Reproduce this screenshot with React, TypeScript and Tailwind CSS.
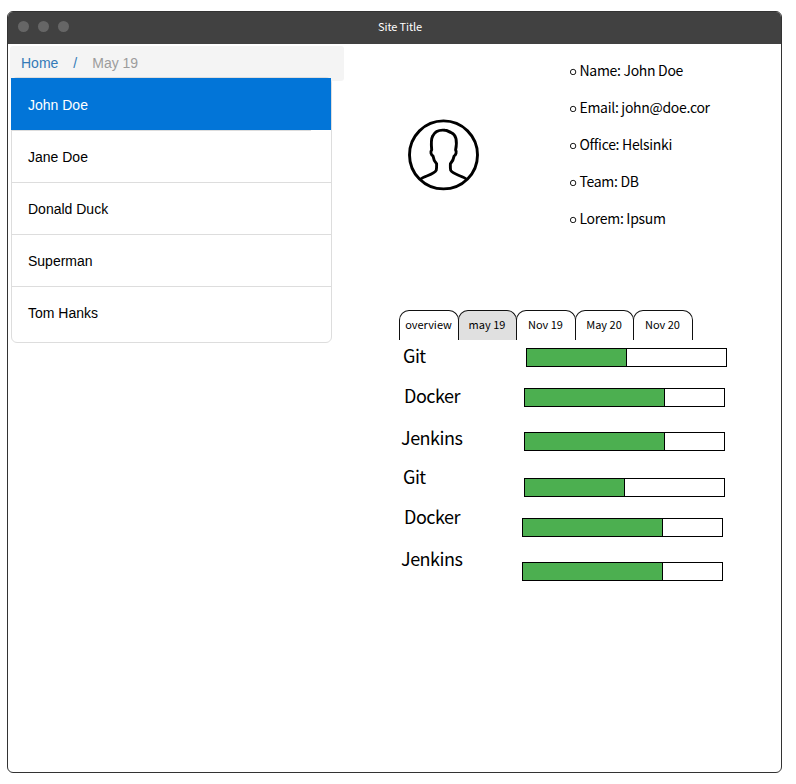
const people = ["Jane Doe", "Donald Duck", "Superman", "Tom Hanks"];

const details = [
  "Name: John Doe",
  "Email: john@doe.cor",
  "Office: Helsinki",
  "Team: DB",
  "Lorem: Ipsum",
];

const tabs = [
  { label: "overview", size: "w-[60px]" },
  { label: "may 19", size: "w-[59px] -ml-px bg-[#e0e0e0]" },
  { label: "Nov 19", size: "w-[60px] -ml-px" },
  { label: "May 20", size: "w-[59px] -ml-px" },
  { label: "Nov 20", size: "w-[60px] -ml-px" },
];

const skills = [
  { name: "Git", label: "pl-1 h-10", bar: "ml-1", fill: "w-[101px]" },
  { name: "Docker", label: "pl-[5px] h-[42px]", bar: "ml-0.5 mt-[21px]", fill: "w-[141px]" },
  { name: "Jenkins", label: "pl-0.5 h-[39px]", bar: "ml-0.5 mt-[25px]", fill: "w-[141px]" },
  { name: "Git", label: "pl-1 h-10", bar: "ml-0.5 mt-[27px]", fill: "w-[101px]" },
  { name: "Docker", label: "pl-[5px] h-[42px]", bar: "mt-[21px]", fill: "w-[141px]" },
  { name: "Jenkins", label: "pl-0.5 h-[39px]", bar: "mt-[25px]", fill: "w-[141px]" },
];

function TitleBar() {
  return (
    <header className="flex h-8 bg-[#414141]">
      <div className="flex w-[370px] gap-[9px] pt-[9px] pl-2.5">
        <span className="size-[11px] rounded-full bg-[#666]" />
        <span className="size-[11px] rounded-full bg-[#666]" />
        <span className="size-[11px] rounded-full bg-[#666]" />
      </div>
      <h1 className="pt-1.5 text-[11px] leading-4 tracking-[-0.1px] whitespace-nowrap text-white">Site Title</h1>
    </header>
  );
}

function Avatar() {
  return (
    <svg className="h-[72px] w-[71px]" viewBox="0 0 71 72" fill="none" stroke="#000" strokeWidth="2.9" strokeLinejoin="round">
      <circle cx="35.5" cy="35.9" r="34" />
      <path d="M12.5 60.2 C16 57 26.5 55.5 28.2 51.3 C28.8 49 28.6 47 28.6 44.8 C26.5 42.5 25.4 40 25 37 C23 35.8 22.1 32.8 23.7 31 C23.2 26 23 20 24.8 16.8 C27.2 12 32.5 10.8 37 11.3 C39.5 11.3 40.5 12.8 43 13.5 C49.7 16.2 49 24 47.6 31 C49 32.8 47.8 36.3 46.1 37 C45.7 40 44.4 42.5 42.4 44.8 C42.4 47 42.1 49 42.7 51.3 C44.5 55.5 55 57 58.5 60.2" />
    </svg>
  );
}

function Sidebar() {
  return (
    <aside className="w-[336px] pt-0.5 pl-0.5 font-['Liberation_Sans',Arial,sans-serif] text-sm">
      <nav className="flex h-[35px] items-center rounded-[3px] bg-[#f4f4f4] pb-0.5 pl-[11px] text-[#337ab7]">
        <a>Home</a>
        <span className="ml-[15px]">/</span>
        <span className="ml-[15px] text-[#9c9c9c]">May 19</span>
      </nav>
      <ul className="relative -mt-1 ml-px h-[266px] w-[321px] rounded-md border border-[#ddd] bg-white text-black">
        <li className="-ml-px flex h-[52px] items-center bg-[#0275d8] pt-0.5 pl-[17px] text-white">John Doe</li>
        {people.map((name, i) => (
          <li key={name} className="h-[52px]">
            <div className={i === 0 ? "h-px w-[299px] bg-[#ddd]" : "h-px bg-[#ddd]"} />
            <div className="flex h-[51px] items-center pt-px pl-4">{name}</div>
          </li>
        ))}
      </ul>
    </aside>
  );
}

function Profile() {
  return (
    <section className="flex h-[266px]">
      <div className="w-[161px] pt-[75px] pl-[9px]">
        <Avatar />
      </div>
      <ul className="pt-2 pl-2.5 text-sm tracking-[-0.3px]">
        {details.map((item) => (
          <li key={item} className="flex h-[37px] items-start">
            <svg className="mt-4 mr-[2.5px] size-[7px]" viewBox="0 0 7 7" fill="none" stroke="#000" strokeWidth="0.9">
              <circle cx="3.1" cy="4" r="2.7" />
            </svg>
            <span className="mt-1.5 leading-6 whitespace-nowrap">{item}</span>
          </li>
        ))}
      </ul>
    </section>
  );
}

function Skills() {
  return (
    <section className="flex">
      <div className="w-[123px] pt-0.5 text-lg tracking-[-0.5px]">
        {skills.map((s, i) => (
          <div key={i} className={`${s.label} leading-6`}>{s.name}</div>
        ))}
      </div>
      <div className="pt-[7px]">
        {skills.map((s, i) => (
          <div key={i} className={`${s.bar} h-[19px] w-[201px] border border-black`}>
            <div className={`${s.fill} -ml-px h-full border-x border-black bg-[#4caf50]`} />
          </div>
        ))}
      </div>
    </section>
  );
}

export default function App() {
  return (
    <div className="h-[784px] w-[796px] bg-white pt-[11px] pl-[7px] font-['Noto_Sans_CJK_SC',sans-serif] text-black">
      <div className="h-[762px] w-[775px] overflow-hidden rounded-md border border-[#333]">
        <TitleBar />
        <div className="flex">
          <Sidebar />
          <main className="ml-[55px]">
            <Profile />
            <div className="flex h-[31px]">
              {tabs.map((tab) => (
                <div
                  key={tab.label}
                  className={`${tab.size} h-[30px] rounded-t-[10px] border border-b-0 border-[#111] pr-px text-center text-[11px] leading-[26px]`}
                >
                  {tab.label}
                </div>
              ))}
            </div>
            <Skills />
          </main>
        </div>
      </div>
    </div>
  );
}
